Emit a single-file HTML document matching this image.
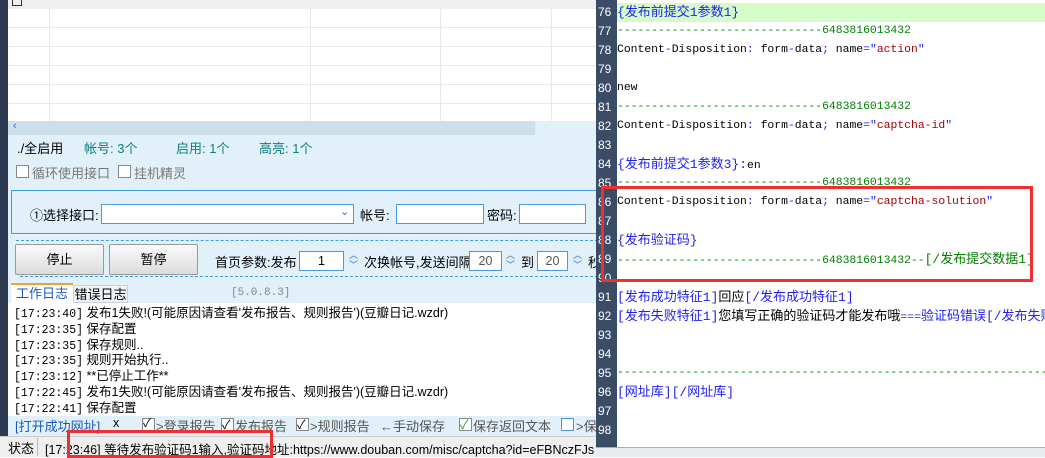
<!DOCTYPE html><html><head><meta charset="utf-8"><style>
*{margin:0;padding:0;box-sizing:border-box}
body{width:1045px;height:457px;overflow:hidden;position:relative;background:#fff;font-family:"Liberation Sans","Noto Sans CJK SC",sans-serif;font-size:12.5px;color:#000}
.a{position:absolute;white-space:nowrap}
.cb{position:absolute;width:13px;height:13px;border:1px solid #888;background:#fff}
.code{position:absolute;left:617px;font-family:"Liberation Mono","Noto Sans CJK SC",monospace;font-size:11.4px;white-space:nowrap}
.code div{height:19px;line-height:19px;overflow:visible}
.code .c{font-size:13px}
.ln{position:absolute;left:597px;width:20px;color:#fff;font-family:"Liberation Sans",sans-serif;font-size:12px;line-height:19px;padding-left:1px}
.g{color:#008000}.b{color:#2020f0}.r{color:#a00000}
.log div{height:15.8px;line-height:15.8px}
.log .t{font-family:"Liberation Mono",monospace;font-size:11.5px}
</style></head><body>
<div class="a" style="left:0;top:0;width:8px;height:457px;background:#2b3a50"></div>
<div class="a" style="left:8px;top:0;width:590px;height:9px;background:#efefef"></div>
<div class="a" style="left:12px;top:0;width:10px;height:6px;border:1px solid #333;border-top:none"></div>
<div class="a" style="left:8px;top:9px;width:590px;height:112px;background:#fff;
background-image:linear-gradient(#e8e8e8 1px,transparent 1px);background-size:100% 19px;background-position:0 18px"></div>
<div class="a" style="left:49px;top:9px;width:1px;height:112px;background:#e8e8e8"></div>
<div class="a" style="left:310px;top:9px;width:1px;height:112px;background:#e8e8e8"></div>
<div class="a" style="left:440px;top:9px;width:1px;height:112px;background:#e8e8e8"></div>
<div class="a" style="left:551px;top:9px;width:1px;height:112px;background:#e8e8e8"></div>
<div class="a" style="left:8px;top:121px;width:590px;height:316px;background:#e2f1f9"></div>
<div class="a" style="left:8px;top:121px;width:527px;height:14px;background:#cde0ea"></div>
<div class="a" style="left:13px;top:120px;color:#2a6ad0;font-size:11px">‹</div>
<div class="a" style="left:17px;top:138px;font-size:13px">./全启用</div>
<div class="a" style="left:84px;top:138px;color:#0a8080;font-size:13px">帐号: 3个</div>
<div class="a" style="left:176px;top:138px;color:#0a8080;font-size:13px">启用: 1个</div>
<div class="a" style="left:259px;top:138px;color:#0a8080;font-size:13px">高亮: 1个</div>
<div class="cb" style="left:16px;top:165px"></div><div class="a" style="left:32px;top:163px;color:#777;font-size:13px">循环使用接口</div>
<div class="cb" style="left:118px;top:165px"></div><div class="a" style="left:134px;top:163px;color:#777;font-size:13px">挂机精灵</div>
<div class="a" style="left:11px;top:190px;width:590px;height:44px;border:1px solid #3aa0e0"></div>
<div class="a" style="left:30px;top:205px;font-size:13px">①选择接口:</div>
<div class="a" style="left:101px;top:204px;width:253px;height:20px;background:#fff;border:1px solid #4a9ad8"></div>
<div class="a" style="left:340px;top:205px;color:#2a6ad0;font-size:11px">⌄</div>
<div class="a" style="left:360px;top:205px;font-size:13px">帐号:</div>
<div class="a" style="left:396px;top:204px;width:88px;height:20px;background:#fff;border:1px solid #4a9ad8"></div>
<div class="a" style="left:487px;top:205px;font-size:13px">密码:</div>
<div class="a" style="left:519px;top:204px;width:67px;height:20px;background:#fff;border:1px solid #4a9ad8"></div>
<div class="a" style="left:16px;top:240px;width:582px;border-top:1px dashed #3aa0e0"></div>
<div class="a" style="left:20px;top:276px;width:578px;border-top:1px dashed #3aa0e0"></div>
<div class="a" style="left:15px;top:244px;width:89px;height:31px;border:1px solid #999;border-radius:2px;background:linear-gradient(#fafafa,#dcdcdc);text-align:center;line-height:30px;font-size:13px">停止</div>
<div class="a" style="left:109px;top:244px;width:89px;height:31px;border:1px solid #999;border-radius:2px;background:linear-gradient(#fafafa,#dcdcdc);text-align:center;line-height:30px;font-size:13px">暂停</div>
<div class="a" style="left:215px;top:252px;font-size:13px">首页参数:发布</div>
<div class="a" style="left:299px;top:251px;width:45px;height:20px;background:#fff;border:1px solid #4a9ad8;text-align:center;line-height:18px">1</div>
<div class="a" style="left:349px;top:250px;color:#2a6ad0;font-size:9px;line-height:10px">︿<br>﹀</div>
<div class="a" style="left:364px;top:252px;font-size:13px">次换帐号,发送间隔</div>
<div class="a" style="left:469px;top:251px;width:33px;height:20px;background:#fff;border:1px solid #4a9ad8;text-align:center;line-height:18px;color:#555">20</div>
<div class="a" style="left:506px;top:250px;color:#2a6ad0;font-size:9px;line-height:10px">︿<br>﹀</div>
<div class="a" style="left:521px;top:252px;font-size:13px">到</div>
<div class="a" style="left:537px;top:251px;width:31px;height:20px;background:#fff;border:1px solid #4a9ad8;text-align:center;line-height:18px;color:#555">20</div>
<div class="a" style="left:573px;top:250px;color:#2a6ad0;font-size:9px;line-height:10px">︿<br>﹀</div>
<div class="a" style="left:588px;top:252px;font-size:13px">秒</div>
<div class="a" style="left:11px;top:283px;width:62px;height:20px;background:#fff;border-top:2px solid #f0a030;color:#1a5ac0;text-align:center;line-height:18px;font-size:13px">工作日志</div>
<div class="a" style="left:73px;top:285px;width:55px;height:18px;background:#eef4f8;border:1px solid #ccd;text-align:center;line-height:17px;font-size:13px">错误日志</div>
<div class="a" style="left:231px;top:287px;color:#888;font-family:'Liberation Mono',monospace;font-size:11px">[5.0.8.3]</div>
<div class="a log" style="left:8px;top:303px;width:589px;height:113px;background:#fff;overflow:hidden;font-size:12.5px;padding:3px 0 0 6px">
<div><span class="t">[17:23:40]</span> 发布1失败!(可能原因请查看'发布报告、规则报告')(豆瓣日记.wzdr)</div>
<div><span class="t">[17:23:35]</span> 保存配置</div>
<div><span class="t">[17:23:35]</span> 保存规则..</div>
<div><span class="t">[17:23:35]</span> 规则开始执行..</div>
<div><span class="t">[17:23:12]</span> **已停止工作**</div>
<div><span class="t">[17:22:45]</span> 发布1失败!(可能原因请查看'发布报告、规则报告')(豆瓣日记.wzdr)</div>
<div><span class="t">[17:22:41]</span> 保存配置</div></div>
<div class="a" style="left:15px;top:416px;color:#1a5ac0;font-size:13px">[打开成功网址]</div>
<div class="a" style="left:113px;top:416px">x</div>
<div class="cb" style="left:142px;top:418px"></div><div class="a" style="left:143px;top:414px;font-size:12px">✓</div><div class="a" style="left:156px;top:416px;color:#555;font-size:13px">>登录报告</div>
<div class="cb" style="left:221px;top:418px"></div><div class="a" style="left:222px;top:414px">✓</div><div class="a" style="left:235px;top:416px;color:#555;font-size:13px">发布报告</div>
<div class="cb" style="left:296px;top:418px"></div><div class="a" style="left:297px;top:414px">✓</div><div class="a" style="left:310px;top:416px;color:#555;font-size:13px">>规则报告</div>
<div class="a" style="left:380px;top:416px;color:#555;font-size:13px">←手动保存</div>
<div class="cb" style="left:459px;top:418px"></div><div class="a" style="left:460px;top:414px;color:#2a9a2a">✓</div><div class="a" style="left:473px;top:416px;color:#555;font-size:13px">保存返回文本</div>
<div class="cb" style="left:561px;top:418px;border-color:#4a9ad8"></div><div class="a" style="left:576px;top:416px;color:#555;font-size:13px">>保存</div>
<div class="a" style="left:0;top:436px;width:597px;height:21px;background:#efefef;border-top:1px solid #ccc"></div>
<div class="a" style="left:8px;top:438px;font-size:13px">状态</div>
<div class="a" style="left:37px;top:438px;width:1px;height:18px;background:#bbb"></div>
<div class="a" style="left:45px;top:439px;font-size:12.5px">[17:23:46] 等待发布验证码1输入,验证码地址:https://www.douban.com/misc/captcha?id=eFBNczFJs</div>
<div class="a" style="left:67px;top:430px;width:206px;height:28px;border:3px solid #f03030"></div>
<div class="a" style="left:596px;top:0;width:21px;height:447px;background:#3a4c66"></div>
<div class="a" style="left:617px;top:3px;width:428px;height:19px;background:#d4fcc8"></div>
<div class="a" style="left:596px;top:447px;width:449px;height:10px;background:#e8ecef;border-top:1px solid #aab"></div>
<div class="ln" style="top:3px">76<br>77<br>78<br>79<br>80<br>81<br>82<br>83<br>84<br>85<br>86<br>87<br>88<br>89<br>90<br>91<br>92<br>93<br>94<br>95<br>96<br>97<br>98</div>
<div class="code" style="top:3px">
<div><span class="b c">{发布前提交1参数1}</span></div>
<div><span class="g">------------------------------6483816013432</span></div>
<div>Content<span class="b">-</span>Disposition<span class="b">:</span> form<span class="b">-</span>data<span class="b">;</span> name<span class="b">="</span><span class="r">action</span><span class="b">"</span></div>
<div></div>
<div>new</div>
<div><span class="g">------------------------------6483816013432</span></div>
<div>Content<span class="b">-</span>Disposition<span class="b">:</span> form<span class="b">-</span>data<span class="b">;</span> name<span class="b">="</span><span class="r">captcha-id</span><span class="b">"</span></div>
<div></div>
<div><span class="b c">{发布前提交1参数3}:</span>en</div>
<div><span class="g">------------------------------6483816013432</span></div>
<div>Content<span class="b">-</span>Disposition<span class="b">:</span> form<span class="b">-</span>data<span class="b">;</span> name<span class="b">="</span><span class="r">captcha-solution</span><span class="b">"</span></div>
<div></div>
<div><span class="b c">{发布验证码}</span></div>
<div><span class="g">------------------------------6483816013432--<span class="c">[/发布提交数据1]</span></span></div>
<div></div>
<div><span class="b c">[发布成功特征1]</span><span class="c">回应</span><span class="b c">[/发布成功特征1]</span></div>
<div><span class="b c">[发布失败特征1]</span><span class="c">您填写正确的验证码才能发布哦</span><span class="b">===</span><span class="b c">验证码错误[/发布失败特征1]</span></div>
<div></div><div></div>
<div><span class="g">------------------------------------------------------------------</span></div>
<div><span class="b c">[网址库][/网址库]</span></div></div>
<div class="a" style="left:601px;top:186px;width:432px;height:96px;border:3px solid #f03030"></div>
</body></html>
